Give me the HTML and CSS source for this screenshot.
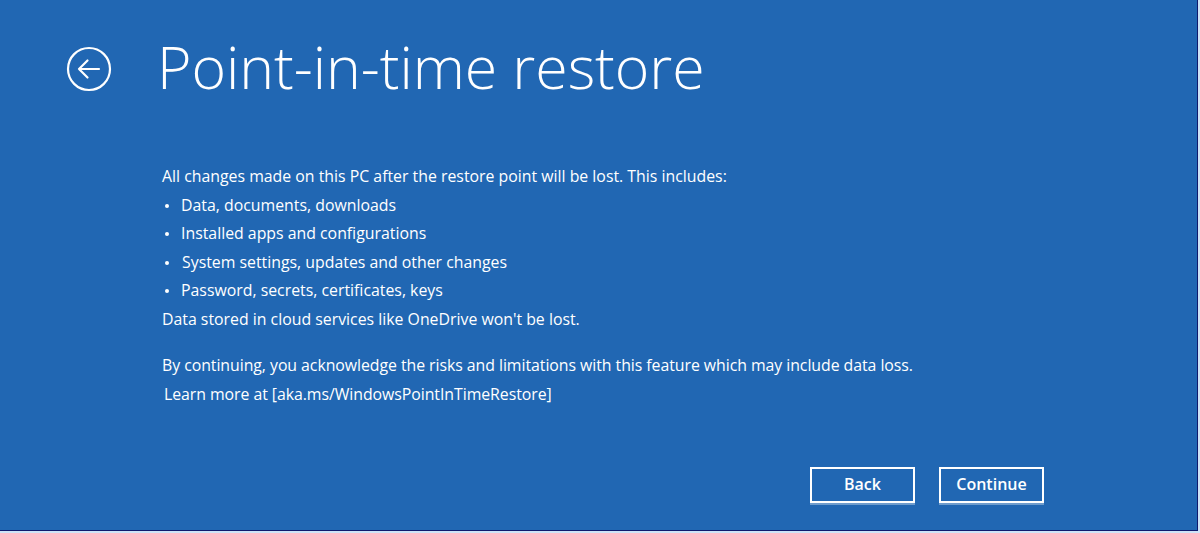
FILE: index.html
```html
<!DOCTYPE html>
<html>
<head>
<meta charset="utf-8">
<link rel="stylesheet" href="styles.css">
</head>
<body>
<div class="frame">
  <div class="screen">
    <header class="header">
      <svg class="back-icon" width="46" height="46" viewBox="0 0 46 46" aria-hidden="true">
        <circle cx="23" cy="23" r="21" fill="none" stroke="#fff" stroke-width="2.2"/>
        <path d="M13 23 H33 M21.5 14.5 L13 23 L21.5 31.5" fill="none" stroke="#fff" stroke-width="2.2" stroke-linecap="round" stroke-linejoin="round"/>
      </svg>
      <h1 class="title">Point-in-time restore</h1>
    </header>
    <main class="content">
      <p class="line">All changes made on this PC after the restore point will be lost. This includes:</p>
      <ul class="list">
        <li>Data, documents, downloads</li>
        <li>Installed apps and configurations</li>
        <li class="indent">System settings, updates and other changes</li>
        <li>Password, secrets, certificates, keys</li>
      </ul>
      <p class="line">Data stored in cloud services like OneDrive won't be lost.</p>
      <p class="line narrow gap">By continuing, you acknowledge the risks and limitations with this feature which may include data loss.</p>
      <p class="line narrow learn">Learn more at [aka.ms/WindowsPointInTimeRestore]</p>
    </main>
    <footer class="actions">
      <button class="btn">Back</button>
      <button class="btn">Continue</button>
    </footer>
  </div>
</div>
</body>
</html>
```
FILE: styles.css
```css
html, body {
  margin: 0;
  padding: 0;
  width: 1200px;
  height: 533px;
  overflow: hidden;
  background: #cfe3f7;
}
.frame {
  width: 1197px;
  height: 530px;
  border-right: 1px solid #101a6e;
  border-bottom: 1px solid #101a6e;
  box-sizing: content-box;
  background: #2167b3;
}
.screen {
  width: 1197px;
  height: 530px;
  display: flex;
  flex-direction: column;
  color: #fff;
  font-family: "Open Sans", "Liberation Sans", sans-serif;
}
.header {
  display: flex;
  align-items: center;
  padding: 34px 0 0 66px;
  height: 70px;
}
.back-icon {
  display: block;
  flex: none;
}
.title {
  margin: 0 0 0 45px;
  font-weight: 300;
  font-size: 59px;
  line-height: 70px;
  letter-spacing: -0.05px;
  position: relative;
  top: -3px;
}
.content {
  padding: 58px 0 0 162px;
  font-size: 15.85px;
  line-height: 28.6px;
}
.line {
  margin: 0;
  white-space: nowrap;
}
.list {
  margin: 0;
  padding: 0;
  list-style: none;
}
.list li {
  position: relative;
  padding-left: 19px;
}
.list li::before {
  content: "";
  position: absolute;
  left: 3px;
  top: 13px;
  width: 4px;
  height: 4px;
  border-radius: 50%;
  background: #fff;
}
.list li.indent {
  padding-left: 20px;
}
.narrow {
  letter-spacing: -0.05px;
}
.gap {
  margin-top: 17px;
}
.learn {
  padding-left: 2px;
  margin-top: 1px;
}
.actions {
  margin-top: auto;
  display: flex;
  gap: 24px;
  padding: 0 0 27px 810px;
}
.btn {
  width: 105px;
  height: 36px;
  border: 2px solid #fff;
  background: transparent;
  color: #fff;
  font-family: "Open Sans", "Liberation Sans", sans-serif;
  font-weight: 600;
  font-size: 16px;
  padding: 0 0 2px;
  box-shadow: 0 2px 0 rgba(255,255,255,0.35);
}
```
